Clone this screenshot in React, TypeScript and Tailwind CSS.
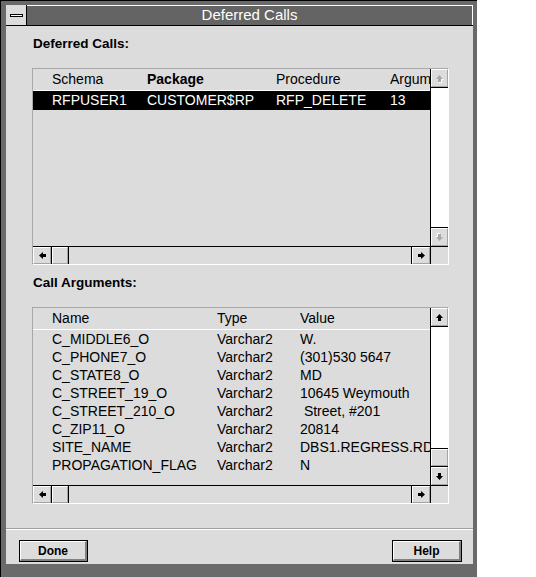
import clsx from 'clsx';

type Dir = 'up' | 'down' | 'left' | 'right';

const rotation: Record<Dir, string> = {
  up: '',
  right: 'rotate-90',
  down: 'rotate-180',
  left: '-rotate-90',
};

const Arrow = ({ dir, disabled }: { dir: Dir; disabled?: boolean }) => (
  <svg width="9" height="9" viewBox="0 0 9 9" className={rotation[dir]}>
    {disabled && <path d="M5.5 2 L9 6 H7 V9 H4 V6 H2 Z" fill="#ffffff" />}
    <path d="M4.5 1 L8 5 H6 V8 H3 V5 H1 Z" fill={disabled ? '#a8a8a8' : '#000000'} />
  </svg>
);

// raised grey face used by arrows and thumbs
const Face = ({ children }: { children?: React.ReactNode }) => (
  <div className="flex-1 self-stretch flex items-center justify-center bg-[#dcdcdc] border-t border-l border-t-white border-l-white border-r border-b border-r-[#a4a4a4] border-b-[#a4a4a4]">
    {children}
  </div>
);

interface Col {
  label: string;
  w: string;
  bold?: boolean;
}

interface ListBoxProps {
  cols: Col[];
  rows: string[][];
  selected?: number;
  rowH: string;
  disabled?: boolean;
  thumb?: boolean;
}

const ListBox = ({ cols, rows, selected, rowH, disabled, thumb }: ListBoxProps) => (
  <div className="w-[417px] h-[197px] border border-t-[#a8a8a8] border-l-[#a8a8a8] border-r-white border-b-white grid grid-cols-[1fr_18px] grid-rows-[1fr_18px]">
    {/* rows */}
    <div className="overflow-hidden flex flex-col text-[14px] text-black">
      <div className="h-[22px] shrink-0 border-b border-white flex items-center pl-[19px] whitespace-nowrap">
        {cols.map((c) => (
          <div key={c.label} className={clsx(c.w, 'shrink-0 overflow-hidden', c.bold && 'font-bold')}>
            {c.label}
          </div>
        ))}
      </div>
      {rows.map((r, i) => (
        <div
          key={i}
          className={clsx(
            rowH,
            'shrink-0 flex items-center pl-[19px] whitespace-pre',
            selected === i && 'bg-black text-white'
          )}
        >
          {r.map((cell, j) => (
            <div key={j} className={clsx(cols[j].w, 'shrink-0 overflow-hidden')}>
              {cell}
            </div>
          ))}
        </div>
      ))}
    </div>

    {/* vertical scrollbar */}
    <div className="border-l border-black flex flex-col">
      <div className="h-[19px] border-b border-black flex">
        <Face>
          <Arrow dir="up" disabled={disabled} />
        </Face>
      </div>
      <div className="flex-1 bg-white" />
      {thumb && (
        <div className="h-[18px] border-t border-black flex">
          <Face />
        </div>
      )}
      <div className="h-[19px] border-t border-black flex">
        <Face>
          <Arrow dir="down" disabled={disabled} />
        </Face>
      </div>
    </div>

    {/* horizontal scrollbar */}
    <div className="border-t border-black flex">
      <div className="w-[19px] border-r border-black flex">
        <Face>
          <Arrow dir="left" />
        </Face>
      </div>
      <div className="w-[17px] border-r border-black flex">
        <Face />
      </div>
      <div className="flex-1 bg-[#dcdcdc]" />
      <div className="w-[19px] border-l border-black flex">
        <Face>
          <Arrow dir="right" />
        </Face>
      </div>
    </div>
    <div className="border-t border-l border-black bg-[#dcdcdc]" />
  </div>
);

const DlgButton = ({ label, w }: { label: string; w: string }) => (
  <div className={clsx(w, 'h-[22px] border border-black flex')}>
    <div className="flex-1 flex items-center justify-center bg-[#dcdcdc] border-t border-l border-t-white border-l-white border-r-2 border-b-2 border-r-[#808080] border-b-[#808080] text-[12px] font-bold text-black">
      {label}
    </div>
  </div>
);

export default function App() {
  const argRows = [
    ['C_MIDDLE6_O', 'Varchar2', 'W.'],
    ['C_PHONE7_O', 'Varchar2', '(301)530 5647'],
    ['C_STATE8_O', 'Varchar2', 'MD'],
    ['C_STREET_19_O', 'Varchar2', '10645 Weymouth'],
    ['C_STREET_210_O', 'Varchar2', ' Street, #201'],
    ['C_ZIP11_O', 'Varchar2', '20814'],
    ['SITE_NAME', 'Varchar2', 'DBS1.REGRESS.RDBMS.DEV.US.ORACLE.COM'],
    ['PROPAGATION_FLAG', 'Varchar2', 'N'],
  ];

  return (
    <div className="w-[536px] h-[577px] bg-white flex font-['Liberation_Sans',Arial,sans-serif]">
      <div className="w-[477px] h-[577px] bg-[#6a6a6a] border-t border-l border-black pt-[4px] pl-[5px] pr-[4px] pb-[13px] flex flex-col">
        {/* title bar */}
        <div className="h-[21px] shrink-0 flex border-b border-black">
          <div className="w-[21px] border-r border-black bg-[#dcdcdc] flex items-center justify-center">
            <div className="w-[13px] h-[3px] border border-black bg-white" />
          </div>
          <div className="flex-1 bg-[#646464] border-t border-r border-white flex items-center justify-center text-white text-[15px]">
            Deferred Calls
          </div>
        </div>

        {/* body */}
        <div className="flex-1 bg-[#dcdcdc] flex flex-col">
          <div className="pl-[26px] pt-[10px] flex flex-col">
            <div className="h-[16px] leading-[16px] pl-px text-[13.5px] font-bold text-black">Deferred Calls:</div>
            <div className="mt-[16px]">
              <ListBox
                cols={[
                  { label: 'Schema', w: 'w-[95px]' },
                  { label: 'Package', w: 'w-[129px]', bold: true },
                  { label: 'Procedure', w: 'w-[114px]' },
                  { label: 'Arguments', w: 'w-[120px]' },
                ]}
                rows={[['RFPUSER1', 'CUSTOMER$RP', 'RFP_DELETE', '13']]}
                selected={0}
                rowH="h-[19px]"
                disabled
              />
            </div>
            <div className="mt-[10px] h-[16px] leading-[16px] pl-px text-[13.5px] font-bold text-black">Call Arguments:</div>
            <div className="mt-[16px]">
              <ListBox
                cols={[
                  { label: 'Name', w: 'w-[165px]' },
                  { label: 'Type', w: 'w-[83px]' },
                  { label: 'Value', w: 'w-[300px]' },
                ]}
                rows={argRows}
                rowH="h-[18px]"
                thumb
              />
            </div>
          </div>

          <div className="mt-[24px] h-[2px] border-t border-[#a0a0a0] border-b border-b-white" />

          <div className="mt-[10px] pl-[13px] pr-[11px] flex justify-between">
            <DlgButton label="Done" w="w-[69px]" />
            <DlgButton label="Help" w="w-[70px]" />
          </div>
        </div>
      </div>
    </div>
  );
}
